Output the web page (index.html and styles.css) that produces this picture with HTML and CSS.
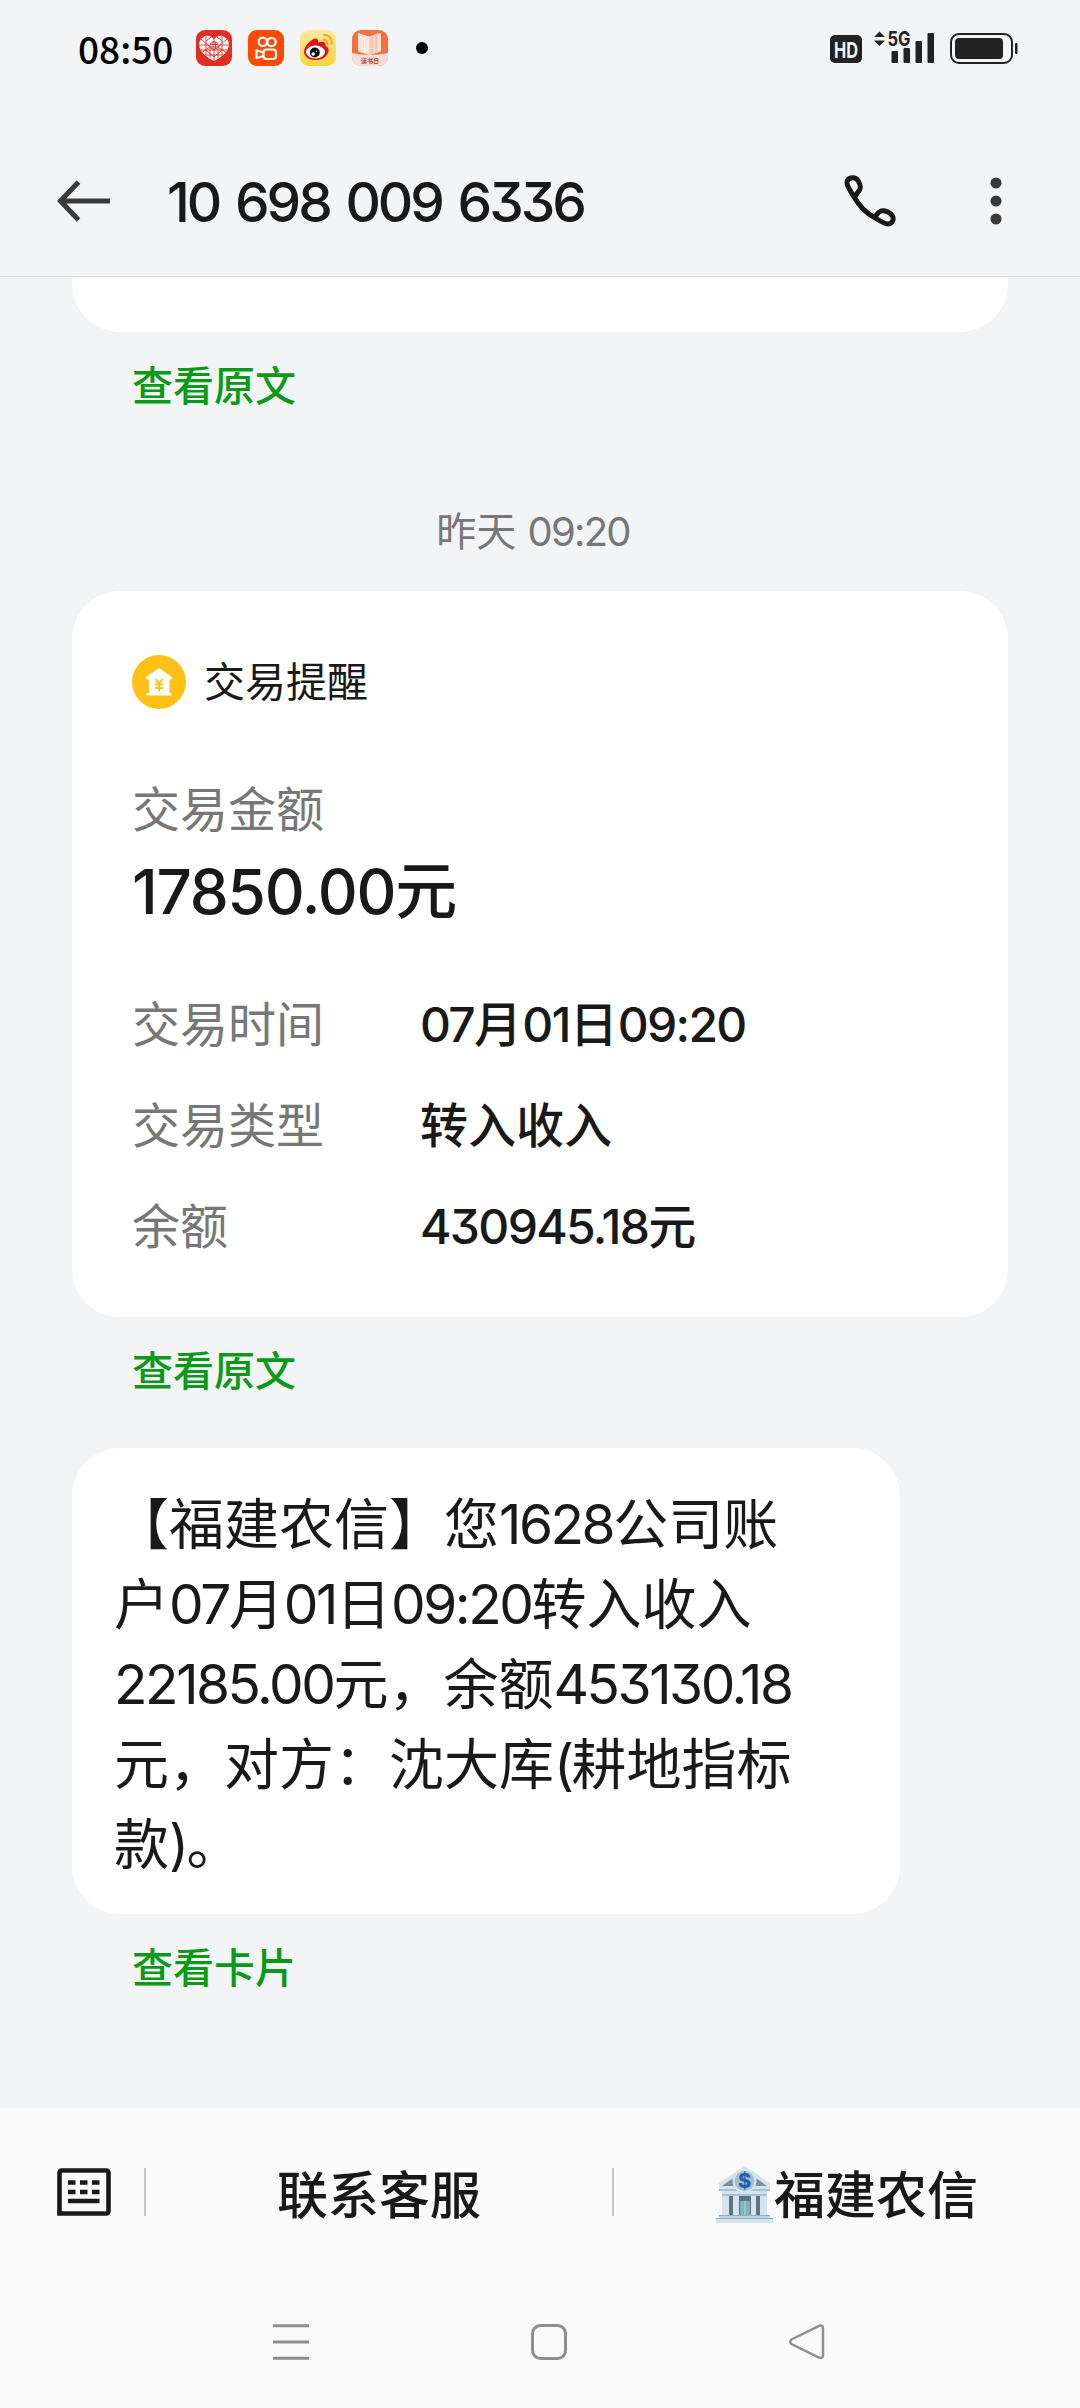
FILE: index.html
```html
<!DOCTYPE html>
<html lang="zh-CN">
<head>
    <meta charset="UTF-8">
    <title>10 698 009 6336</title>
    <link rel="stylesheet" href="styles.css">
</head>
<body>
    <div class="status-bar">
        <span class="clock">08:50</span>
        <div class="apps">
            <!-- heart -->
            <svg width="36" height="36" viewBox="0 0 36 36">
                <rect width="36" height="36" rx="9" fill="#e02e24"/>
                <path d="M18 9.500C15 5 10.500 5 7.500 7C3.500 9.500 2.500 13 3.500 17C5 23 11 27.500 18 31C25 27.500 31 23 32.500 17C33.500 13 32.500 9.500 28.500 7C25.500 5 21 5 18 9.500Z" fill="#fff"/>
                <g fill="none" stroke="#e02e24" stroke-width="0.900">
                    <path d="M18 9V14M18 18V31M3 15H14M22 15H33M5 20H31M9 25H27M10 6V25M26 6V25M14 18V28M22 18V28"/>
                    <path d="M5 9L14 17L5 23M31 9L22 17L31 23M10 11L15 7M26 11L21 7M10 20L18 27L26 20"/>
                    <circle cx="18" cy="15.500" r="4"/>
                    <path d="M15 14.500H21M15 17H21M17 12V19M19.500 12V19"/>
                </g>
            </svg>
            <!-- video camera -->
            <svg width="36" height="36" viewBox="0 0 36 36">
                <rect width="36" height="36" rx="9" fill="#ff4906"/>
                <g fill="none" stroke="#fff" stroke-width="2.200">
                    <circle cx="14.800" cy="11.800" r="4.200"/>
                    <circle cx="23.500" cy="12" r="4.200"/>
                    <rect x="15.500" y="19.500" width="12.500" height="9.500" rx="3"/>
                    <path d="M15 22.500L8.500 20.200V28.200L15 26" stroke-linejoin="round"/>
                </g>
            </svg>
            <!-- eye -->
            <svg width="36" height="36" viewBox="0 0 36 36">
                <defs>
                    <linearGradient id="gold" x1="0" y1="0" x2="0" y2="1">
                        <stop offset="0" stop-color="#ffe9a0"/>
                        <stop offset="1" stop-color="#ffd43a"/>
                    </linearGradient>
                </defs>
                <rect width="36" height="36" rx="9" fill="url(#gold)"/>
                <path d="M4 21.500C4 17 10 10 15 8.500C18 8 18.500 10 18 12.500C22 11 26 11 25.500 16C28.500 17 29.500 19.500 28 23C26 28 20 30.500 14.500 30C8.500 29.500 4 26.500 4 21.500Z" fill="#e01414"/>
                <ellipse cx="15.500" cy="22" rx="9.500" ry="6.500" fill="#fff"/>
                <circle cx="14.800" cy="22.500" r="5" fill="#111"/>
                <circle cx="13.200" cy="24" r="1.700" fill="#fff"/>
                <circle cx="16.500" cy="21.300" r="0.800" fill="#fff"/>
                <g fill="none" stroke="#f5a623" stroke-width="2" stroke-linecap="round">
                    <path d="M23.500 9.500C26 9.500 27.500 11.500 27.200 14"/>
                    <path d="M24 5C29 4.500 32.500 9 31.500 14"/>
                </g>
            </svg>
            <!-- book -->
            <svg width="36" height="36" viewBox="0 0 36 36">
                <defs>
                    <clipPath id="round"><rect width="36" height="36" rx="9"/></clipPath>
                </defs>
                <g clip-path="url(#round)">
                    <rect width="36" height="36" fill="#f4713f"/>
                    <path d="M0 23Q18 27 36 23V36H0Z" fill="#f6ddd5"/>
                    <path d="M6 3L17.500 6.500L29 3V21.500L17.500 25L6 21.500Z" fill="#fbe3d8"/>
                    <path d="M17.500 6.500L26 3V21.500L17.500 25Z" fill="#f6c8b5"/>
                    <path d="M22 5V23M12.500 5V23" stroke="#fff" stroke-width="0.600"/>
                    <text x="18" y="33" text-anchor="middle" font-size="6.200" font-weight="700" fill="#c84a22">读书日</text>
                </g>
            </svg>
        </div>
        <span class="dot"></span>
        <svg class="signals" width="190" height="40" viewBox="0 0 190 40">
            <rect x="0" y="7" width="32" height="28" rx="5" fill="#222"/>
            <text x="16" y="29.500" text-anchor="middle" font-size="22" font-weight="700" textLength="24" lengthAdjust="spacingAndGlyphs" fill="#f2f4f6">HD</text>
            <path d="M44 9L49.500 3.500L55 9ZM44 12.500L49.500 18L55 12.500Z" fill="#222"/>
            <text x="57.500" y="18" font-size="20" font-weight="700" textLength="23" lengthAdjust="spacingAndGlyphs" fill="#222">5G</text>
            <g fill="#222">
                <rect x="61.500" y="23" width="6.500" height="12" rx="1"/>
                <rect x="73.500" y="20" width="6.500" height="15" rx="1"/>
                <rect x="85.500" y="13" width="6.500" height="22" rx="1"/>
                <rect x="97.500" y="5" width="6.500" height="30" rx="1"/>
                <rect x="125" y="10" width="48" height="21" rx="4"/>
                <rect x="185" y="15" width="2.500" height="11" rx="1"/>
            </g>
            <rect x="121" y="6" width="61" height="29" rx="8" fill="none" stroke="#222" stroke-width="2"/>
        </svg>
    </div>

    <div class="header">
        <svg class="back" width="54" height="42" viewBox="0 0 54 42" fill="none" stroke="#3a3a3a" stroke-width="5">
            <path d="M53 21H4M21.500 2L3.500 21L21.500 40"/>
        </svg>
        <h1>10 698 009 6336</h1>
        <svg class="call" width="52" height="52" viewBox="0 0 52 52" fill="none" stroke="#191919" stroke-width="5" stroke-linejoin="round">
            <path d="M10.500 22.500C5.500 15 1.500 8.500 3.500 5.500C5.500 2 11.500 1.500 14 5.500C16.500 9.500 17 12.500 15.500 15C14 17.500 12 19 10.500 22.500C15 30.500 22 38 30.500 42.500C33 39.500 34 37 37 36C41 34.800 46.500 37.500 48.500 41C50.500 45 47.500 49 44 49C41 49 36 46 30.500 42.500"/>
        </svg>
        <svg class="more" width="12" height="48" viewBox="0 0 12 48" fill="#3a3a3a">
            <circle cx="6" cy="6" r="5.500"/>
            <circle cx="6" cy="24" r="5.500"/>
            <circle cx="6" cy="42" r="5.500"/>
        </svg>
    </div>

    <div class="chat">
        <div class="card card-cut"></div>
        <a class="link">查看原文</a>

        <div class="time">昨天 <span class="num">09:20</span></div>

        <div class="card">
            <div class="card-title">
                <svg width="54" height="54" viewBox="0 0 54 54">
                    <circle cx="27" cy="27" r="27" fill="#ffc116"/>
                    <path d="M27 13L40.500 22.500L39 24.500H37.500V38H39.500V40.500H14.500V38H17V24.500H15L13.500 22.500Z" fill="#fff"/>
                    <path d="M23.500 24L27 28.500L30.500 24M27 28.500V36.500M23 29.500H31M23 33H31" fill="none" stroke="#ffc116" stroke-width="2"/>
                </svg>
                <span>交易提醒</span>
            </div>
            <div class="label">交易金额</div>
            <div class="amount"><span class="num">17850.00</span>元</div>
            <dl>
                <dt>交易时间</dt>
                <dd><span class="num">07</span>月<span class="num">01</span>日<span class="num">09:20</span></dd>
                <dt>交易类型</dt>
                <dd>转入收入</dd>
                <dt>余额</dt>
                <dd><span class="num">430945.18</span>元</dd>
            </dl>
        </div>
        <a class="link">查看原文</a>

        <div class="bubble">
            【福建农信】您<span class="num">1628</span>公司账<br>
            户<span class="num">07</span>月<span class="num">01</span>日<span class="num">09:20</span>转入收入<br>
            <span class="num">22185.00</span>元，余额<span class="num">453130.18</span><br>
            元，对方：沈大库<span class="num">(</span>耕地指标<br>
            款<span class="num">)</span>。
        </div>
        <a class="link">查看卡片</a>
    </div>

    <div class="footer">
        <div class="menu">
            <div class="keyboard">
                <svg width="54" height="48" viewBox="0 0 54 48">
                    <path d="M2.500 45.500V5Q2.500 2.500 5 2.500H49Q51.500 2.500 51.500 5V43Q51.500 45.500 49 45.500Z" fill="none" stroke="#191919" stroke-width="4.600"/>
                    <path d="M11 14.500H18.500M23 14.500H30.500M35 14.500H42.500M11 24H18.500M23 24H30.500M35 24H42.500M11 33H42.500" stroke="#191919" stroke-width="4.600"/>
                </svg>
            </div>
            <div class="menu-item">联系客服</div>
            <div class="menu-item">
                <!-- bank -->
                <svg width="58" height="58" viewBox="0 0 58 58">
                    <path d="M29 0L54 17V24H3V17Z" fill="#d3e4ee"/>
                    <path d="M6 20L20 10V20ZM51 20L37 10V20Z" fill="#78909c"/>
                    <path d="M3 23H54V25H3Z" fill="#a9c2d1"/>
                    <path d="M6 25H51V49H6Z" fill="#d3e4ee"/>
                    <path d="M6 28H51V30H6Z" fill="#a9c2d1"/>
                    <path d="M13 30H17V49H13ZM40 30H44V49H40ZM23 30H35V49H23Z" fill="#5f747f"/>
                    <path d="M24 35H34V49H24Z" fill="#82b1ba"/>
                    <path d="M29 35V49" stroke="#b5d5da" stroke-width="1"/>
                    <path d="M3 49H54V53H3Z" fill="#bcd3e0"/>
                    <path d="M0 53H57V57H0Z" fill="#d3e4ee"/>
                    <path d="M0 52.500H57M3 49.500H54" stroke="#92aebf" stroke-width="1"/>
                    <circle cx="28.500" cy="15" r="11" fill="#a3bfcf" stroke="#d3e4ee" stroke-width="2"/>
                    <text x="28.500" y="22" text-anchor="middle" font-size="20" font-weight="800" fill="#1f5fb5">$</text>
                </svg>
                <span>福建农信</span>
            </div>
        </div>
        <div class="nav">
            <svg width="36" height="36" viewBox="0 0 36 36">
                <path d="M1 1.700H35M1 18H35M1 34.300H35"/>
            </svg>
            <svg width="36" height="36" viewBox="0 0 36 36">
                <rect x="1.500" y="1.500" width="33" height="33" rx="8"/>
            </svg>
            <svg width="36" height="36" viewBox="0 0 36 36">
                <path d="M2.500 15.500L30 1.800Q34 0.500 34 4.500V31Q34 35 30 33.500L2.500 20Q0 17.800 2.500 15.500Z" stroke-width="2.500"/>
            </svg>
        </div>
    </div>
</body>
</html>
```
FILE: styles.css
```css
* {
    box-sizing: border-box;
}

body {
    margin: 0;
    width: 1080px;
    height: 2408px;
    display: flex;
    flex-direction: column;
    overflow: hidden;
    background-color: #f2f4f6;
    color: #191919;
    font-family: Inter, "Noto Sans CJK SC", sans-serif;
    font-feature-settings: "cv09";
}

svg {
    display: block;
    flex: none;
}

.num {
    letter-spacing: -0.045em;
}

/* Status bar */
.status-bar {
    height: 96px;
    padding: 0 60px 0 78px;
    display: flex;
    align-items: center;
}

.clock {
    width: 118px;
    font-family: "Noto Sans CJK SC", sans-serif;
    font-size: 37px;
    font-weight: 500;
    line-height: 50px;
    color: #000;
}

.apps {
    display: flex;
    gap: 16px;
}

.dot {
    width: 12px;
    height: 12px;
    margin-left: 28px;
    border-radius: 50%;
    background-color: #000;
}

.signals {
    margin-left: auto;
}

/* Header */
.header {
    height: 181px;
    padding: 55px 78px 25px 57px;
    display: flex;
    align-items: center;
    border-bottom: 1px solid #dadcde;
}

h1 {
    margin: 0 auto 0 56px;
    padding-top: 2px;
    font-size: 55px;
    font-weight: 500;
    line-height: 80px;
    letter-spacing: -0.055em;
    word-spacing: 4px;
}

.more {
    margin-left: 94px;
}

/* Messages */
.chat {
    flex: 1;
    padding: 0 72px;
    overflow: hidden;
}

.card {
    height: 726px;
    padding: 64px 60px 39px;
    border-radius: 48px;
    background-color: #fff;
}

.card-cut {
    height: 55px;
    padding: 0;
    border-radius: 0 0 48px 48px;
}

.link {
    display: block;
    height: 108px;
    padding-left: 60px;
    font-size: 41px;
    font-weight: 500;
    line-height: 108px;
    color: #0a9a18;
}

.time {
    height: 60px;
    margin: 62px 0 29px;
    padding-right: 14px;
    font-size: 40px;
    line-height: 60px;
    text-align: center;
    color: #777;
}

.card-title {
    height: 54px;
    display: flex;
    align-items: center;
    gap: 18px;
    font-size: 41px;
    line-height: 54px;
}

.label {
    height: 60px;
    margin-top: 71px;
    font-size: 48px;
    line-height: 60px;
    color: #777;
}

.amount {
    height: 76px;
    margin-top: 14px;
    font-size: 62px;
    font-weight: 500;
    line-height: 76px;
}

.amount .num {
    letter-spacing: -0.02em;
}

dl {
    margin: 44px 0 0;
    display: grid;
    grid-template-columns: 288px 1fr;
    grid-auto-rows: 101px;
    font-size: 48px;
    line-height: 101px;
}

dt {
    color: #777;
}

dd {
    margin: 0;
    font-weight: 500;
}

dd .num {
    letter-spacing: -0.035em;
}

.bubble {
    width: 828px;
    height: 466px;
    margin-top: 23px;
    padding: 36px 42px;
    border-radius: 48px;
    background-color: #fff;
    font-size: 55px;
    line-height: 80px;
    white-space: nowrap;
    text-spacing-trim: space-all;
}

/* Bottom bar */
.footer {
    height: 300px;
    background-color: #fafafa;
}

.menu {
    height: 168px;
    display: flex;
    align-items: center;
}

.keyboard {
    width: 146px;
    padding-left: 57px;
    border-right: 2px solid #c8c8c8;
}

.menu-item {
    height: 48px;
    flex: 1;
    display: flex;
    align-items: center;
    justify-content: center;
    font-size: 51px;
    font-weight: 500;
}

.menu-item + .menu-item {
    border-left: 2px solid #c8c8c8;
}

.menu-item svg {
    margin-top: 6px;
}

.nav {
    padding: 48px 255px 0 273px;
    display: flex;
    justify-content: space-between;
    fill: none;
    stroke: #8f8f8f;
    stroke-width: 3;
    stroke-linecap: round;
}
```
